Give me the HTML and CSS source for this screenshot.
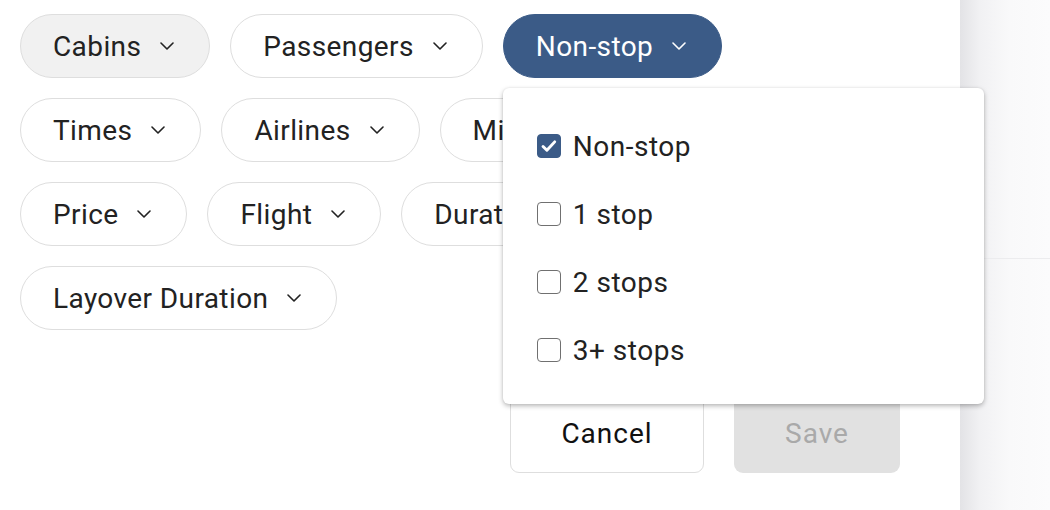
FILE: index.html
```html
<!DOCTYPE html>
<html lang="en">
<head>
<meta charset="utf-8">
<title>Filters</title>
<link rel="stylesheet" href="styles.css">
</head>
<body>
<div class="page">
  <main class="panel">
    <div class="chips">
      <div class="chip-row">
        <button class="chip chip-muted">Cabins <svg class="chev" viewBox="0 0 14 8"><path d="M1 1l6 6 6-6"/></svg></button>
        <button class="chip">Passengers <svg class="chev" viewBox="0 0 14 8"><path d="M1 1l6 6 6-6"/></svg></button>
        <div class="chip-wrap">
          <button class="chip chip-active">Non-stop <svg class="chev" viewBox="0 0 14 8"><path d="M1 1l6 6 6-6"/></svg></button>
          <div class="menu">
            <label class="opt"><span class="box box-on"><svg viewBox="0 0 24 24"><path d="M5.5 12.5l4.2 4.2 8.5-9.2"/></svg></span>Non-stop</label>
            <label class="opt"><span class="box"></span>1 stop</label>
            <label class="opt"><span class="box"></span>2 stops</label>
            <label class="opt"><span class="box"></span>3+ stops</label>
          </div>
        </div>
      </div>
      <div class="chip-row">
        <button class="chip">Times <svg class="chev" viewBox="0 0 14 8"><path d="M1 1l6 6 6-6"/></svg></button>
        <button class="chip">Airlines <svg class="chev" viewBox="0 0 14 8"><path d="M1 1l6 6 6-6"/></svg></button>
        <button class="chip">Mileage <svg class="chev" viewBox="0 0 14 8"><path d="M1 1l6 6 6-6"/></svg></button>
      </div>
      <div class="chip-row">
        <button class="chip">Price <svg class="chev" viewBox="0 0 14 8"><path d="M1 1l6 6 6-6"/></svg></button>
        <button class="chip">Flight <svg class="chev" viewBox="0 0 14 8"><path d="M1 1l6 6 6-6"/></svg></button>
        <button class="chip">Duration <svg class="chev" viewBox="0 0 14 8"><path d="M1 1l6 6 6-6"/></svg></button>
      </div>
      <div class="chip-row">
        <button class="chip">Layover Duration <svg class="chev" viewBox="0 0 14 8"><path d="M1 1l6 6 6-6"/></svg></button>
      </div>
    </div>
    <div class="actions">
      <button class="btn btn-cancel">Cancel</button>
      <button class="btn btn-save" disabled>Save</button>
    </div>
  </main>
  <aside class="side">
    <div class="side-top"></div>
  </aside>
</div>
</body>
</html>
```

FILE: styles.css
```css
* { box-sizing: border-box; }
html, body { margin: 0; padding: 0; background: #fff; }
body {
  font-family: Roboto, "Liberation Sans", sans-serif;
  color: #222;
  width: 1050px;
  height: 510px;
  overflow: hidden;
}
.page {
  display: flex;
  height: 510px;
}
.panel {
  width: 960px;
  padding: 14px 20px 0 20px;
  display: flex;
  flex-direction: column;
}
.chips {
  display: flex;
  flex-direction: column;
  gap: 20px;
}
.chip-row {
  display: flex;
  gap: 20px;
  align-items: flex-start;
}
.chip-wrap {
  position: relative;
}
.chip {
  height: 64px;
  display: inline-flex;
  align-items: center;
  gap: 19px;
  padding: 0 35px 0 32px;
  border: 1.5px solid #dedede;
  border-radius: 32px;
  background: #fff;
  font-family: inherit;
  font-size: 28px;
  letter-spacing: 0.4px;
  color: #222;
  white-space: nowrap;
  cursor: pointer;
}
.chip-muted { background: #f1f1f1; }
.chip-active {
  background: #3b5b87;
  border-color: #3b5b87;
  color: #fff;
}
.chev {
  width: 14px;
  height: 8px;
  fill: none;
  stroke: currentColor;
  stroke-width: 1.6;
  stroke-linecap: round;
  stroke-linejoin: round;
}
.menu {
  position: absolute;
  top: calc(100% + 10px);
  left: 0;
  width: 481px;
  height: 316px;
  padding: 24px 34px 20px;
  background: #fff;
  border-radius: 6px;
  box-shadow: 0 2px 5px rgba(0,0,0,0.28), 0 0 2px rgba(0,0,0,0.08);
  display: flex;
  flex-direction: column;
  z-index: 5;
}
.opt {
  height: 68px;
  display: flex;
  align-items: center;
  gap: 12px;
  font-size: 28px;
  letter-spacing: 0.5px;
  color: #222;
}
.box {
  width: 24px;
  height: 24px;
  border: 1.8px solid #707070;
  border-radius: 4px;
  background: #fff;
  display: inline-flex;
  flex: none;
}
.box-on {
  background: #3b5b87;
  border-color: #3b5b87;
}
.box-on svg {
  width: 100%;
  height: 100%;
  fill: none;
  stroke: #fff;
  stroke-width: 3.2;
  stroke-linecap: round;
  stroke-linejoin: round;
}
.actions {
  display: flex;
  justify-content: flex-end;
  gap: 30px;
  padding-right: 40px;
  margin-top: 63px;
}
.btn {
  height: 80px;
  border-radius: 9px;
  font-family: inherit;
  font-size: 28px;
  letter-spacing: 1px;
}
.btn-cancel {
  width: 194px;
  background: #fff;
  border: 1.5px solid #dedede;
  color: #111;
}
.btn-save {
  width: 166px;
  background: #e1e1e1;
  border: none;
  color: #a9a9a9;
}
.side {
  width: 90px;
  background: linear-gradient(90deg, #e3e3e6 0%, #f1f1f3 22%, #f9f9fa 55%, #fbfbfc 100%);
}
.side-top {
  height: 259px;
  border-bottom: 1.5px solid #ececee;
}
```
